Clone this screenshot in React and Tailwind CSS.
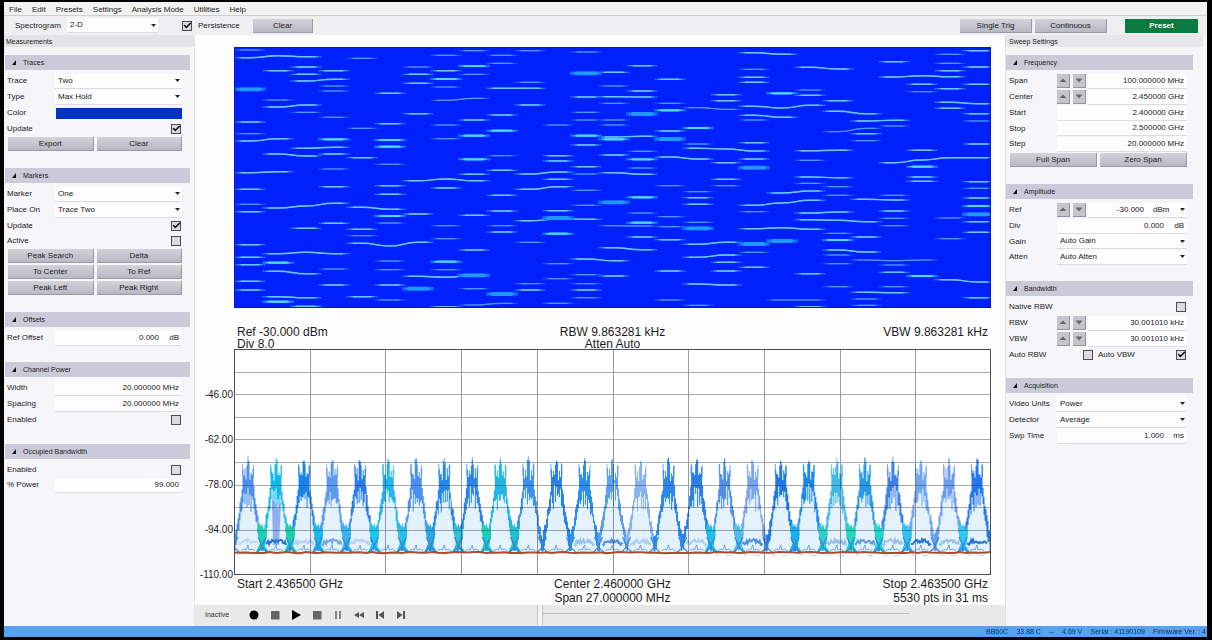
import { useId } from "react";
import { Check } from "lucide-react";

/* ---------- small controls ---------- */

function DownArrow() {
  return (
    <svg viewBox="0 0 5 3" className="pointer-events-none mr-[2px] h-[3px] w-[5px] self-center justify-self-end [grid-area:1/1]" aria-hidden="true">
      <path d="M0 0h5L2.5 3z" fill="#222" />
    </svg>
  );
}

function Select({ id, value, label }) {
  return (
    <span className="grid h-[15px] min-w-0 flex-1 border-b border-[#dcdce0] bg-[#fdfdfd]">
      <select id={id} aria-label={label} defaultValue={value} className="w-full appearance-none bg-transparent pl-[3px] leading-[14px] outline-none [grid-area:1/1]">
        <option>{value}</option>
      </select>
      <DownArrow />
    </span>
  );
}

function Tick({ id, checked, label }) {
  return (
    <span className="grid size-[10px] place-items-center">
      <input id={id} type="checkbox" aria-label={label} defaultChecked={checked} className="peer m-0 size-[10px] appearance-none border border-[#4c4c4c] bg-[#dcdce0] [grid-area:1/1]" />
      <Check className="pointer-events-none hidden size-[9px] text-[#111] [grid-area:1/1] peer-checked:block" strokeWidth={4} />
    </span>
  );
}

function PushButton({ children, className = "flex-1" }) {
  return (
    <button className={`h-[14px] border-b border-r border-[#9a9aa4] bg-linear-to-b from-[#d2d2da] to-[#b9b9c5] text-center leading-[13px] text-[#222] ${className}`}>
      {children}
    </button>
  );
}

function Steppers({ name }) {
  return (
    <span className="mr-[2px] flex gap-[3px]">
      <button aria-label={`Increase ${name}`} className="grid h-[14px] w-[13px] place-items-center border-b border-r border-[#92929c] bg-[#c4c4cc]">
        <svg viewBox="0 0 8 5" className="h-[5px] w-2"><path d="M4 0.500l3.500 3.500h-7z" fill="#66666c" /></svg>
      </button>
      <button aria-label={`Decrease ${name}`} className="grid h-[14px] w-[13px] place-items-center border-b border-r border-[#92929c] bg-[#c4c4cc]">
        <svg viewBox="0 0 8 5" className="h-[5px] w-2"><path d="M0.500 0.500h7L4 4.500z" fill="#66666c" /></svg>
      </button>
    </span>
  );
}

/* ---------- form rows ---------- */

function Row({ id, label, children, className = "h-4" }) {
  return (
    <div className={`flex items-center ${className}`}>
      <label htmlFor={id} className="w-12 shrink-0 whitespace-nowrap">{label}</label>
      {children}
    </div>
  );
}

function SelectRow({ label, value, className }) {
  const id = useId();
  return (
    <Row id={id} label={label} className={className}>
      <Select id={id} value={value} />
    </Row>
  );
}

function ValueRow({ label, value, unit, units, steppers, className }) {
  const id = useId();
  return (
    <Row id={id} label={label} className={className}>
      {steppers && <Steppers name={label} />}
      <span className="flex h-[15px] min-w-0 flex-1 items-center border-b border-[#dcdce0] bg-[#fdfdfd]">
        <input id={id} type="text" defaultValue={value} className="w-0 min-w-0 flex-1 bg-transparent pr-[3px] text-right outline-none" />
        {unit && <span className="w-5 pr-[3px] text-right">{unit}</span>}
        {units && (
          <span className="grid w-10">
            <select aria-label={`${label} units`} defaultValue={units} className="appearance-none bg-transparent pl-[6px] outline-none [grid-area:1/1]">
              <option>{units}</option>
            </select>
            <DownArrow />
          </span>
        )}
      </span>
    </Row>
  );
}

function CheckRow({ label, checked, className = "h-[15px]" }) {
  const id = useId();
  return (
    <div className={`flex items-center justify-between pr-[1px] ${className}`}>
      <label htmlFor={id}>{label}</label>
      <Tick id={id} checked={checked} />
    </div>
  );
}

function Buttons({ names }) {
  return (
    <div className="flex h-4 items-center gap-[3px] pl-[1px]">
      {names.map((n) => <PushButton key={n}>{n}</PushButton>)}
    </div>
  );
}

function Section({ title, side, children }) {
  const right = side === "right";
  return (
    <section className="mb-4">
      <h3 className={right ? "mr-[14px]" : "mr-1 ml-[1px]"}>
        <button aria-expanded="true" className="flex h-[15px] w-full items-center gap-[7px] bg-[#cbcad8] pl-[7px] text-[7px] text-[#222]">
          <svg viewBox="0 0 4 5" className="h-[5px] w-1" aria-hidden="true"><path d="M4 0v5H0z" fill="#111" /></svg>
          {title}
        </button>
      </h3>
      <div className={right ? "pt-[3px] pr-5 pl-[3px]" : "pt-[3px] pr-3 pl-[3px]"}>{children}</div>
    </section>
  );
}

/* ---------- spectrogram ---------- */

// Each burst: [first channel, strength, y of every channel it crosses], y in thirds of a pixel.
const BURSTS = [
  [0,1,30],[0,2,53,47,50],[0,4,148],[0,2,246],[0,1,281],[0,2,303,296],[0,2,398,395],[0,2,448],[0,1,493],[0,2,515],[0,2,614],[0,2,652],[0,2,674],[0,2,724],[0,2,750],
  [1,2,92],[1,1,180],[1,2,201,195],[1,2,342,348],[1,2,504,498,490],[4,2,502,508],[1,2,641,637,641],[1,3,668],[1,2,694,701],[1,2,770,773],[1,3,785],
  [2,2,81],[2,2,103],[2,2,123,118],[2,1,217],[2,2,325,322],[2,2,565],[2,3,800],
  [3,2,92],[3,1,138],[3,1,153],[3,1,232],[3,3,298],[3,2,342],[3,1,387],[3,2,440],[3,2,550],[3,1,687],[3,2,735],
  [4,1,55],[4,1,265],[4,2,353],[4,2,568],[4,1,587],[4,2,610,618,607],[4,2,770],
  [5,2,160],[5,2,251],[5,3,300],[5,3,320],[5,1,373],[5,2,437],[5,2,463],[5,3,528],[6,2,522],[5,1,549],[5,1,663],[5,1,689],[5,2,735],[5,1,780],
  [6,1,81],[6,2,103],[6,2,130],[6,2,221],[6,2,422,417,422],[6,2,709,712,706],[6,4,746],
  [7,1,46],[7,2,92],[7,3,117],[7,1,141],[7,1,181,175],[7,1,255],[7,1,296],[7,2,444],[7,1,557],[7,1,596],[7,3,665],[7,1,689],[7,2,800],
  [8,1,32],[8,3,78],[8,1,103],[8,2,240],[8,3,287],[8,3,358],[8,2,403],[8,2,526],[8,2,630],[8,4,706],[8,1,746],[8,1,795,790],
  [9,1,46],[9,1,70],[9,2,145,145],[9,2,225],[9,3,272],[9,1,347],[9,2,391],[9,2,466],[9,2,513],[9,1,557],[9,2,576],[9,4,762],
  [10,1,32],[10,1,127],[10,2,195],[10,2,402,396],[10,2,448,440],[10,2,542,537,538],[10,1,607],[10,1,731],[10,2,750],
  [11,1,255],[11,2,347],[11,2,363],[11,2,418],[11,2,512],[11,4,534],[11,3,581],[11,1,671],[11,1,716],[11,1,790],
  [12,1,36],[12,4,100],[12,2,171],[12,1,217],[12,1,240],[12,3,287],[12,2,315],[12,2,380],[12,1,402],[12,1,451],[12,1,496],[12,2,657,662],[12,1,704],[12,1,731],[12,2,750],[12,1,773],
  [13,2,97],[13,1,138],[13,2,170,171],[13,1,190],[13,1,240],[13,1,255],[13,2,291,289],[13,3,298],[13,2,345],[13,2,398,403],[13,4,487],[13,1,557,558],[13,2,623,629],[13,2,708],
  [14,2,77],[14,2,153],[14,4,222],[14,1,334],[14,3,358],[14,1,384],[14,3,472],[14,1,519],[14,3,548],[14,2,591],
  [15,2,118],[15,1,190],[15,3,211],[15,2,273],[15,4,297],[15,2,351,357],[15,1,437],[15,1,530],[15,1,560],[15,2,599],[15,2,693],[15,1,780],
  [16,1,203,208],[16,3,264],[16,1,312],[16,2,325,327,333],[16,1,455],[16,2,473],[16,2,493],[16,1,547],[16,4,565],[16,2,613,607],[16,2,652,645],[16,2,732,735],[16,1,796],
  [17,2,164],[17,2,182],[17,2,368],[17,2,418],[17,1,437],[17,2,667],[17,2,693],
  [18,2,38,43],[18,1,88],[18,2,112],[18,2,127],[18,2,199,204,196],[18,2,226,232],[18,1,240],[18,2,308],[18,2,357],[18,4,383],[18,2,496,489,481],[18,1,515],[18,2,566,563,568],[18,4,612],[18,1,637],[18,2,682],
  [19,3,160],[20,2,166],[19,2,459,453],[19,4,603],[19,1,780,780],
  [20,2,82,87],[20,1,150],[20,2,332,331],[20,1,361],[20,2,411,413],[20,1,430],[20,2,519,516],[20,2,539,541,545],[20,2,701],[20,2,800],
  [21,2,182],[21,2,214,221],[21,1,275,265],[21,1,440],[21,1,466],[21,1,580],[21,3,600],[21,2,630,636],[21,1,645],[21,1,671],[21,1,740],
  [22,2,243,241],[22,2,281],[22,1,302],[22,2,478,480],[22,2,591],[22,1,660,662,660],[22,2,757,758],[22,1,777],[22,1,796],
  [23,2,65],[23,2,111,107,110],[23,1,258],[23,2,368,360,353,353],[23,1,466],[23,2,513],[23,1,535],[23,1,557],[23,1,675],[23,2,697],[23,1,740],
  [24,2,133],[24,1,155],[24,2,331],[24,3,380],[24,2,411],[24,2,424],[24,3,708],
  [25,1,43],[25,1,70],[25,2,92],[25,2,146],[25,2,187,191],[25,2,205],[25,1,534],[25,1,596],[25,2,719,726],
  [26,2,32],[26,2,81],[26,2,133],[26,2,221],[26,1,243],[26,2,312],[26,2,425],[26,1,445],[26,2,474],[26,3,498],[26,4,523],[26,2,545],[26,2,577],[26,2,773],
];

const STRENGTH = {
  1: { glow: "#1450ff", core: "#4a98f4", w: 1.2 },
  2: { glow: "#1a70ff", core: "#68c4f2", w: 1.4 },
  3: { glow: "#1088ff", core: "#4cd8ff", w: 2.2 },
  4: { glow: "#1270ff", core: "#1f98ff", w: 3.8 },
};

function burstPath(col, ys, inset) {
  const pts = ys.map((y, i) => [(col + i) * 28 + 16, (y - 21) / 3]);
  const half = 16 - inset;
  let d = `M${pts[0][0] - half} ${pts[0][1].toFixed(1)}H${pts[0][0]}`;
  for (let i = 1; i < pts.length; i++) {
    const [x, y] = pts[i];
    d += `C${x - 12} ${pts[i - 1][1].toFixed(1)} ${x - 16} ${y.toFixed(1)} ${x} ${y.toFixed(1)}`;
  }
  return d + `h${half}`;
}

function Spectrogram() {
  return (
    <svg viewBox="0 0 757 261" preserveAspectRatio="none" className="h-[261px] w-full bg-[#0020fc]" role="img" aria-label="Spectrogram">
      {BURSTS.map(([col, s, ...ys], i) => (
        <g key={i} fill="none">
          <path d={burstPath(col, ys, 0)} stroke={STRENGTH[s].glow} strokeWidth={STRENGTH[s].w} opacity="0.8" />
          <path d={burstPath(col, ys, 4)} stroke={STRENGTH[s].core} strokeWidth={STRENGTH[s].w * 0.7} strokeLinecap="round" opacity="0.7" />
          <path d={burstPath(col, ys, 7)} stroke={STRENGTH[s].core} strokeWidth={STRENGTH[s].w} strokeLinecap="round" />
        </g>
      ))}
      <rect x="0.5" y="0.5" width="756" height="260" fill="none" stroke="#0a18b8" />
    </svg>
  );
}

/* ---------- persistence trace ---------- */

const PEAK_COLORS = [
  "#4a90f0", "#14b8ee", "#1a84ee", "#5a9af0", "#2a7cea", "#22b4f0", "#4a90ee", "#2288ee", "#2a84ea",
  "#20b4e8", "#3a90f0", "#2a80ea", "#2a90f0", "#5aa0f0", "#86b4f4", "#2a88ee", "#2a80ea", "#5090ec",
  "#7aa4f2", "#1f78e6", "#1a88f0", "#40b8e8", "#2898e8", "#4080ec", "#70a8f0", "#6a9cf0", "#2478ec",
];
const CYAN_VALLEYS = { 1: "#1cd0b8", 2: "#1cd0a8", 3: "#18b8e8", 4: "#38b4f0", 5: "#18c8ee", 6: "#28c0ea", 7: "#28a8e0", 8: "#30c0d0", 9: "#1cd0b8", 10: "#20c0d0", 17: "#20c0e8", 18: "#50c0f0", 20: "#18b0f0", 21: "#30d0c8", 22: "#20d8b8", 23: "#20d8c8", 24: "#30c0e8", 26: "#30c8f0" };

// Envelope heights by distance from the peak centre.
const TOP = [112, 114, 129, 122, 126, 118, 140, 148, 155, 163, 169, 174, 179, 183, 187, 190];
const BOTTOM = [143, 152, 142, 156, 148, 153, 158, 164, 170, 177, 184, 190, 196, 200, 202, 203];

function noise(n) {
  const v = Math.sin(n * 127.1) * 43758.5453;
  return v - Math.floor(v);
}

function flankPath(k) {
  let up = "";
  let down = "";
  for (let x = -15; x < 16; x++) {
    const a = Math.abs(x);
    const t = TOP[a] + (noise(k * 61 + x * 3 + 5) - 0.5) * 7;
    const b = BOTTOM[a] + (noise(k * 47 + x * 5 + 9) - 0.5) * (a < 7 ? 16 : 8);
    const bottom = Math.min(202, b);
    up += `${x === -15 ? "M" : "L"}${x - 0.5} ${t.toFixed(1)}h1`;
    down = `L${x + 0.5} ${bottom.toFixed(1)}h-1` + down;
  }
  return up + down + "z";
}

function clutter(k) {
  let d = "M-10 195";
  for (let x = -9; x <= 10; x++) d += `L${x} ${(197 - 5 * Math.cos(x / 9) + (noise(k * 31 + x) - 0.5) * 4).toFixed(1)}`;
  return d;
}

const CLUTTER = { 0: 0.2, 1: 1, 2: 0.25, 3: 0.6, 4: 0.25, 12: 0.4, 13: 0.8, 14: 0.3, 16: 0.3, 18: 0.8, 21: 0.4, 22: 0.7, 23: 0.4, 24: 1, 25: 0.4, 26: 1 };

function TracePlot() {
  const peaks = PEAK_COLORS.map((c, k) => ({ c, k, x: 14 + k * 28.04 }));
  let floor = "M0 203.500";
  for (let x = 6; x <= 757; x += 6) floor += `L${x} ${(203.6 + (noise(x) - 0.5) * 1.2).toFixed(1)}`;
  return (
    <svg viewBox="0 0 757 226" preserveAspectRatio="none" className="h-[226px] w-full bg-white" role="img" aria-label="Persistence spectrum trace">
      {peaks.map(({ k, x }) => (
        <path key={k} transform={`translate(${x} 0)`} d="M0 138L5 148L9 170L13 186L13 194L9 203H-9L-13 194L-13 186L-9 170L-5 148z" fill="#e4f2fd" />
      ))}
      {peaks.map(({ c, k, x }) => (
        <g key={k} transform={`translate(${x} 0)`}>
          <path d={flankPath(k)} fill={c} />
          <path d={`M0 ${107 + noise(k) * 6}v20M-5.500 115v12M5.500 116v12`} stroke={c} strokeWidth="1" opacity="0.7" />
          {k === 1 && <path d="M-4 152l1 44h6l2-44-3 8-3-8z" fill="#7c9cf0" opacity="0.8" />}
        </g>
      ))}
      {peaks.map(({ k, x }) => (
        <g key={k} transform={`translate(${x - 14} 0)`}>
          {CYAN_VALLEYS[k] && <path d="M-3 173l2 5 1-4 2 7 2-5 1 9-2 12 4 6h-4l-3-5-3 5h-3l4-9-3-13z" fill={CYAN_VALLEYS[k]} />}
          <path d="M-4 188L1 199L6 204M4 188L-1 199L-6 204" stroke="#2b86dd" strokeWidth="1.500" fill="none" opacity="0.85" />
        </g>
      ))}
      {peaks.map(({ k, x }) => (
        <g key={k} transform={`translate(${x} 0)`} fill="none" stroke="#2677d4">
          {CLUTTER[k] && <path d={clutter(k)} strokeWidth="2" opacity={CLUTTER[k]} />}
          <path d="M-7 202l3-2 2 1 2-5 1 5 3-1 3 2" strokeWidth="1" opacity="0.6" />
          {k > 16 && <path d="M-9 206h4M2 206.500h5" strokeWidth="1" strokeDasharray="2 1" opacity="0.4" />}
        </g>
      ))}
      <g stroke="#30343c" strokeWidth="1" opacity="0.5" shapeRendering="crispEdges">
        {[1, 2, 3, 4, 5, 6, 7, 8, 9].map((i) => (
          <g key={i}>
            <path d={`M${Math.round(i * 75.7) + 0.5} 0V226`} />
            <path d={`M0 ${Math.round(i * 22.6) + 0.5}H757`} opacity="0.85" />
          </g>
        ))}
      </g>
      <path d={floor} fill="none" stroke="#b04a2c" strokeWidth="2" />
      <rect x="0.5" y="0.5" width="756" height="225" fill="none" stroke="#4a4d52" />
    </svg>
  );
}

/* ---------- playback bar ---------- */

const TRANSPORT = [
  ["Record", <circle cx="6" cy="6" r="4.500" fill="#000" />],
  ["Stop recording", <path d="M2 2h8.500v8.500H2z" fill="#666" />],
  ["Play", <path d="M2 1l9 5-9 5z" fill="#000" />],
  ["Stop playback", <path d="M2 2h8.500v8.500H2z" fill="#666" />],
  ["Pause", <path d="M4 2v8M8 2v8" stroke="#666" strokeWidth="1.500" />],
  ["Rewind", <path d="M6 3v6L1 6zM11 3v6L6 6z" fill="#555" />],
  ["Skip to start", <path d="M2 2h2v8H2zM10 2v8L4.500 6z" fill="#555" />],
  ["Skip to end", <path d="M2 2v8l5.500-4zM8 2h2v8H8z" fill="#555" />],
];

function PlaybackBar() {
  return (
    <div className="flex h-[21px] items-center bg-[#e9e9e9] pb-[1px] pl-[10px] text-[7px] text-[#333]">
      <span className="w-[42px]">Inactive</span>
      <div className="flex gap-2">
        {TRANSPORT.map(([name, icon]) => (
          <button key={name} aria-label={name} className="grid size-[13px] place-items-center">
            <svg viewBox="0 0 12 12" className="size-3">{icon}</svg>
          </button>
        ))}
      </div>
      <div className="ml-[130px] h-full w-[6px] border-r border-l border-[#c4c4c4] bg-[#f4f4f4]" />
      <div className="mb-1 h-px flex-1 bg-[#bdbdbd]" />
      <div className="w-24" />
    </div>
  );
}

/* ---------- page ---------- */

const MENUS = ["File", "Edit", "Presets", "Settings", "Analysis Mode", "Utilities", "Help"];

export default function App() {
  return (
    <div className="flex min-h-screen flex-col bg-black pt-[2px] pr-[5px] pb-[3px] pl-1 font-['Liberation_Sans',Arial,sans-serif] text-[8px] leading-[10px] text-[#222]">
      <nav className="flex h-[14px] items-center gap-[10px] border-b border-[#cfcfcf] bg-[#f1f2f1] pt-[2px] pl-[5px]">
        {MENUS.map((m) => <button key={m}>{m}</button>)}
      </nav>

      <div className="flex h-[19px] items-center bg-[#efeff1] pr-[9px] pl-[11px]">
        <label htmlFor="view" className="w-[52px]">Spectrogram</label>
        <span className="flex w-[91px]"><Select id="view" value="2-D" /></span>
        <span className="ml-6 flex items-center gap-[6px]">
          <Tick id="persist" checked />
          <label htmlFor="persist" className="w-[55px]">Persistence</label>
        </span>
        <PushButton className="w-[60px]">Clear</PushButton>
        <div className="ml-auto flex gap-[3px]">
          <PushButton className="w-[72px]">Single Trig</PushButton>
          <PushButton className="w-[72px]">Continuous</PushButton>
          <button className="ml-[15px] h-[14px] w-[73px] bg-[#0b7a3e] font-bold text-white">Preset</button>
        </div>
      </div>

      <div className="flex flex-1">
        <aside className="w-[191px] shrink-0 border-r border-[#e6e6ea] bg-[#f6f6f9]">
          <h2 className="mb-2 h-3 bg-[#e3e3e5] pt-[2px] pl-[2px] text-[7px]">Measurements</h2>
          <Section title="Traces">
            <SelectRow label="Trace" value="Two" />
            <SelectRow label="Type" value="Max Hold" />
            <Row id="color" label="Color">
              <button id="color" aria-label="Trace color" className="ml-[1px] h-[11px] flex-1 bg-[#0033c4]" />
            </Row>
            <CheckRow label="Update" checked />
            <Buttons names={["Export", "Clear"]} />
          </Section>
          <Section title="Markers">
            <SelectRow label="Marker" value="One" />
            <SelectRow label="Place On" value="Trace Two" />
            <CheckRow label="Update" checked />
            <CheckRow label="Active" />
            <Buttons names={["Peak Search", "Delta"]} />
            <Buttons names={["To Center", "To Ref"]} />
            <Buttons names={["Peak Left", "Peak Right"]} />
          </Section>
          <Section title="Offsets">
            <ValueRow label="Ref Offset" value="0.000" unit="dB" />
          </Section>
          <Section title="Channel Power">
            <ValueRow label="Width" value="20.000000 MHz" />
            <ValueRow label="Spacing" value="20.000000 MHz" />
            <CheckRow label="Enabled" className="h-4" />
          </Section>
          <Section title="Occupied Bandwidth">
            <CheckRow label="Enabled" />
            <ValueRow label="% Power" value="99.000" />
          </Section>
        </aside>

        <main className="flex min-w-0 flex-1 flex-col bg-[#fdfdfd]">
          <div className="pt-3 pr-[14px] pl-[39px]">
            <Spectrogram />
          </div>
          <div className="mt-[17px] flex flex-1 pr-[14px] text-[12px] text-[#1c1c1c]">
            <div className="w-[39px] shrink-0 pt-[47px] pr-[1px] text-right text-[10px]">
              {["-46.00", "-62.00", "-78.00", "-94.00", "-110.00"].map((v) => (
                <div key={v} className="flex h-[45px] items-center justify-end">{v}</div>
              ))}
            </div>
            <div className="min-w-0 flex-1">
              <div className="grid h-6 grid-cols-3 px-[3px] pt-[1px] leading-3">
                <p>Ref -30.000 dBm<br />Div 8.0</p>
                <p className="text-center">RBW 9.863281 kHz<br />Atten Auto</p>
                <p className="text-right">VBW 9.863281 kHz</p>
              </div>
              <TracePlot />
              <div className="grid grid-cols-3 px-[3px] pt-[2px] leading-[14px]">
                <p>Start 2.436500 GHz</p>
                <p className="text-center">Center 2.460000 GHz<br />Span 27.000000 MHz</p>
                <p className="text-right">Stop 2.463500 GHz<br />5530 pts in 31 ms</p>
              </div>
            </div>
          </div>
          <PlaybackBar />
        </main>

        <aside className="w-[202px] shrink-0 border-l border-[#e0e0e4] bg-[#f6f6f8]">
          <h2 className="mr-1 mb-2 h-3 bg-[#e6e6e8] pt-[2px] pl-[3px] text-[7px]">Sweep Settings</h2>
          <Section title="Frequency" side="right">
            <ValueRow label="Span" value="100.000000 MHz" steppers />
            <ValueRow label="Center" value="2.450000 GHz" steppers />
            <ValueRow label="Start" value="2.400000 GHz" />
            <ValueRow label="Stop" value="2.500000 GHz" className="h-[15px]" />
            <ValueRow label="Step" value="20.000000 MHz" />
            <Buttons names={["Full Span", "Zero Span"]} />
          </Section>
          <Section title="Amplitude" side="right">
            <ValueRow label="Ref" value="-30.000" units="dBm" steppers />
            <ValueRow label="Div" value="0.000" unit="dB" />
            <SelectRow label="Gain" value="Auto Gain" className="h-[15px]" />
            <SelectRow label="Atten" value="Auto Atten" />
          </Section>
          <Section title="Bandwidth" side="right">
            <CheckRow label="Native RBW" className="h-4" />
            <ValueRow label="RBW" value="30.001010 kHz" steppers />
            <ValueRow label="VBW" value="30.001010 kHz" steppers />
            <div className="grid grid-cols-2">
              <div className="pr-[4px]"><CheckRow label="Auto RBW" /></div>
              <CheckRow label="Auto VBW" checked />
            </div>
          </Section>
          <Section title="Acquisition" side="right">
            <SelectRow label="Video Units" value="Power" />
            <SelectRow label="Detector" value="Average" />
            <ValueRow label="Swp Time" value="1.000" unit="ms" />
          </Section>
        </aside>
      </div>

      <footer className="flex h-[11px] justify-end bg-[#57a3f0] pt-[1px] text-[7px] text-[#0c2c5c]">
        <p className="flex w-[221px] justify-between pr-[1px] whitespace-nowrap">
          <span>BB60C</span>
          <span>33.88 C</span>
          <span>--</span>
          <span>4.69 V</span>
          <span>Serial : 41190109</span>
          <span>Firmware Ver. : 4</span>
        </p>
      </footer>
    </div>
  );
}
